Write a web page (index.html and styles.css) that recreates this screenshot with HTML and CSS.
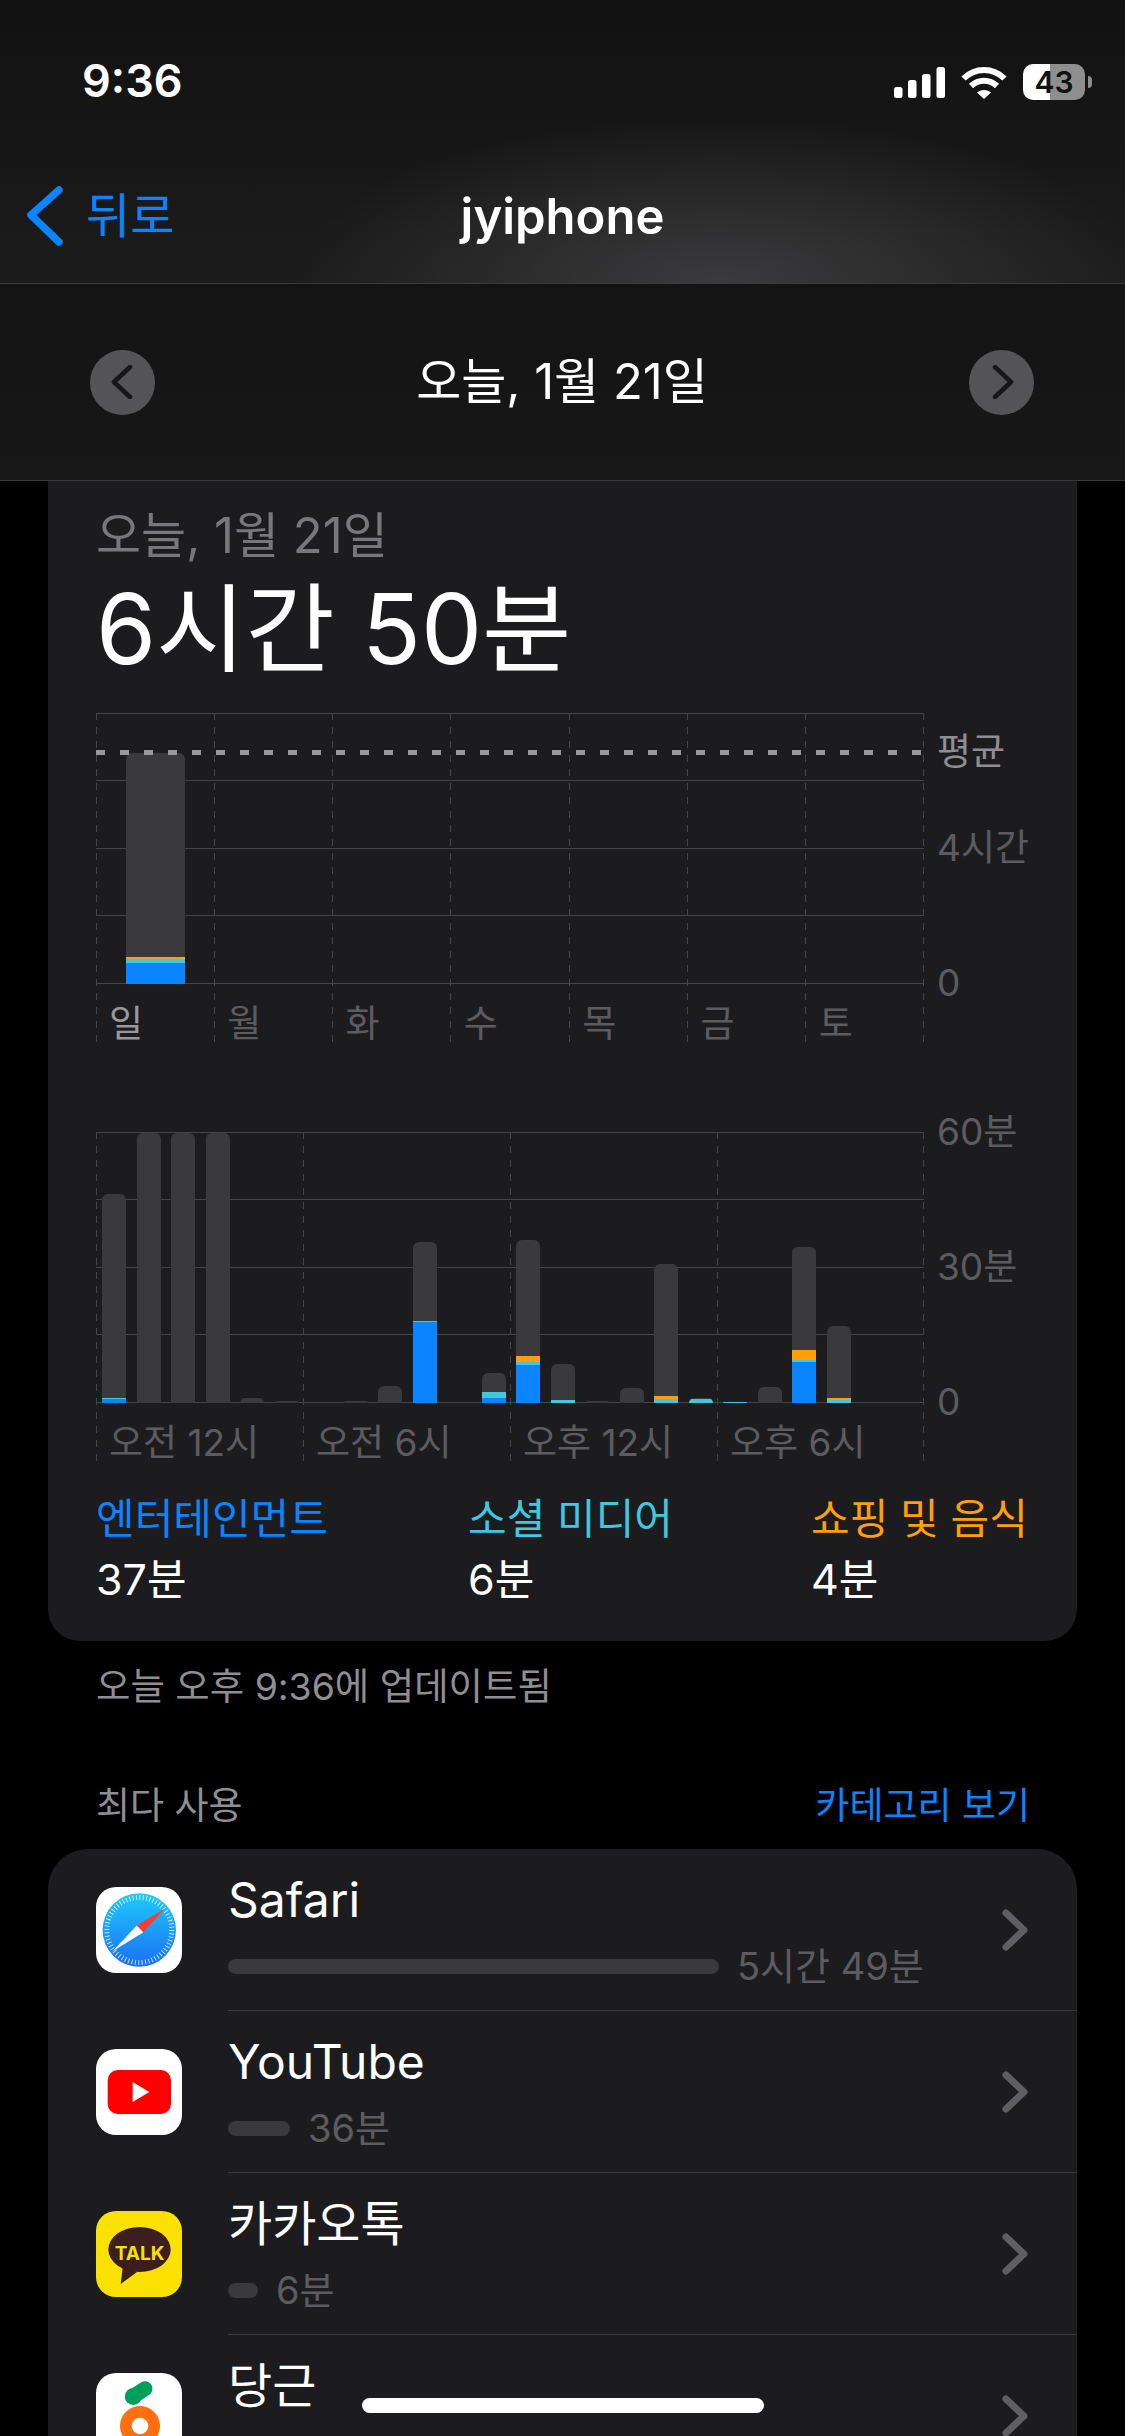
FILE: index.html
```html
<!DOCTYPE html>
<html lang="ko">
<head>
  <meta charset="UTF-8">
  <title>jyiphone</title>
  <link rel="stylesheet" href="styles.css">
</head>
<body>
  <header class="top">
    <div class="status">
      <span class="time">9:36</span>
      <div class="status-icons">
        <svg class="signal" width="51" height="31" viewBox="0 0 51 31" fill="#fff">
          <rect x="0" y="20" width="8.5" height="11" rx="2.5"/>
          <rect x="14" y="13" width="8.5" height="18" rx="2.5"/>
          <rect x="28" y="7" width="8.5" height="24" rx="2.5"/>
          <rect x="42.5" y="0" width="8.5" height="31" rx="2.5"/>
        </svg>
        <svg class="wifi" width="46" height="33" viewBox="0 0 46 33" fill="none" stroke="#fff" stroke-width="6">
          <path d="M2.5 12.5C14 1 32 1 43.5 12.5"/>
          <path d="M10 20C17.5 13 28.500 13 36 20"/>
          <path d="M16 26.500C20 23 26 23 30 26.500L23 33Z" fill="#fff" stroke="none"/>
        </svg>
        <div class="battery"><span>43</span></div>
      </div>
    </div>
    <nav class="nav">
      <a class="back">
        <svg width="38" height="60" viewBox="0 0 38 60" fill="none" stroke="#0a84ff" stroke-width="7.500" stroke-linecap="round" stroke-linejoin="round"><path d="M33 4 5 29 33 56"/></svg>
        <span>뒤로</span>
      </a>
      <h1 class="nav-title">jyiphone</h1>
    </nav>
  </header>

  <div class="date-bar">
    <button class="round-btn">
      <svg width="26" height="34" viewBox="0 0 26 34" fill="none" stroke="#17171a" stroke-width="4.500" stroke-linecap="round" stroke-linejoin="round"><path d="M20 2 4 17 20 32"/></svg>
    </button>
    <span class="date-bar-text">오늘, 1월 21일</span>
    <button class="round-btn">
      <svg width="26" height="34" viewBox="0 0 26 34" fill="none" stroke="#17171a" stroke-width="4.500" stroke-linecap="round" stroke-linejoin="round"><path d="M6 2 22 17 6 32"/></svg>
    </button>
  </div>

  <section class="card summary">
    <div class="summary-date">오늘, 1월 21일</div>
    <div class="summary-total">6시간 50분</div>

    <div class="chart week">
      <svg class="grid" width="830" height="331" viewBox="0 0 830 331" fill="none" stroke="#454547">
        <path d="M0 .5H828M0 67.500H828M0 135.500H828M0 202.500H828M0 270.500H828"/>
        <path stroke-dasharray="7 7" d="M.5 0V331M118.500 0V331M236.500 0V331M354.500 0V331M473.500 0V331M591.500 0V331M709.500 0V331M827.500 0V331"/>
      </svg>
      <div class="plot week-bars">
        <div class="bar">
          <div class="seg seg-idle"></div>
          <div class="seg seg-shop" style="height:2px"></div>
          <div class="seg seg-social" style="height:4px"></div>
          <div class="seg seg-ent" style="height:21px"></div>
        </div>
      </div>
      <div class="avg-line"></div>
      <span class="tick tick-avg">평균</span>
      <span class="tick tick-4h">4시간</span>
      <span class="tick tick-0">0</span>
      <div class="labels week-labels">
        <span class="today">일</span><span>월</span><span>화</span><span>수</span><span>목</span><span>금</span><span>토</span>
      </div>
    </div>

    <div class="chart day">
      <svg class="grid" width="830" height="331" viewBox="0 0 830 331" fill="none" stroke="#454547">
        <path d="M0 .5H828M0 67.500H828M0 135.500H828M0 202.500H828M0 270.500H828"/>
        <path stroke-dasharray="7 7" d="M.5 0V331M207.500 0V331M414.500 0V331M621.500 0V331M827.500 0V331"/>
      </svg>
      <div class="plot hour-bars">
        <div class="bar" style="height:209px"><div class="seg seg-idle"></div><div class="seg seg-social" style="height:1px"></div><div class="seg seg-ent" style="height:4px"></div></div>
        <div class="bar" style="height:270px"><div class="seg seg-idle"></div></div>
        <div class="bar" style="height:270px"><div class="seg seg-idle"></div></div>
        <div class="bar" style="height:270px"><div class="seg seg-idle"></div></div>
        <div class="bar" style="height:5px"><div class="seg seg-idle"></div></div>
        <div class="bar" style="height:2px"><div class="seg seg-idle"></div></div>
        <div class="bar" style="height:0"></div>
        <div class="bar" style="height:2px"><div class="seg seg-idle"></div></div>
        <div class="bar" style="height:17px"><div class="seg seg-idle"></div></div>
        <div class="bar" style="height:161px"><div class="seg seg-idle"></div><div class="seg seg-social" style="height:1px"></div><div class="seg seg-ent" style="height:81px"></div></div>
        <div class="bar" style="height:0"></div>
        <div class="bar" style="height:30px"><div class="seg seg-idle"></div><div class="seg seg-social" style="height:6px"></div><div class="seg seg-ent" style="height:5px"></div></div>
        <div class="bar" style="height:163px"><div class="seg seg-idle"></div><div class="seg seg-shop" style="height:6px"></div><div class="seg seg-social" style="height:3px"></div><div class="seg seg-ent" style="height:38px"></div></div>
        <div class="bar" style="height:39px"><div class="seg seg-idle"></div><div class="seg seg-social" style="height:3px"></div></div>
        <div class="bar" style="height:2px"><div class="seg seg-idle"></div></div>
        <div class="bar" style="height:15px"><div class="seg seg-idle"></div></div>
        <div class="bar" style="height:139px"><div class="seg seg-idle"></div><div class="seg seg-shop" style="height:3px"></div><div class="seg seg-social" style="height:4px"></div></div>
        <div class="bar" style="height:5px"><div class="seg seg-idle"></div><div class="seg seg-social" style="height:4px"></div></div>
        <div class="bar" style="height:1px"><div class="seg seg-social" style="height:1px"></div></div>
        <div class="bar" style="height:16px"><div class="seg seg-idle"></div></div>
        <div class="bar" style="height:156px"><div class="seg seg-idle"></div><div class="seg seg-shop" style="height:10px"></div><div class="seg seg-social" style="height:2px"></div><div class="seg seg-ent" style="height:41px"></div></div>
        <div class="bar" style="height:77px"><div class="seg seg-idle"></div><div class="seg seg-shop" style="height:2px"></div><div class="seg seg-social" style="height:3px"></div></div>
        <div class="bar" style="height:0"></div>
        <div class="bar" style="height:0"></div>
      </div>
      <span class="tick tick-60">60분</span>
      <span class="tick tick-30">30분</span>
      <span class="tick tick-0">0</span>
      <div class="labels day-labels">
        <span>오전 12시</span><span>오전 6시</span><span>오후 12시</span><span>오후 6시</span>
      </div>
    </div>

    <div class="legend">
      <div class="legend-item"><div class="legend-name ent">엔터테인먼트</div><div class="legend-value">37분</div></div>
      <div class="legend-item"><div class="legend-name social">소셜 미디어</div><div class="legend-value">6분</div></div>
      <div class="legend-item"><div class="legend-name shop">쇼핑 및 음식</div><div class="legend-value">4분</div></div>
    </div>
  </section>

  <p class="updated">오늘 오후 9:36에 업데이트됨</p>

  <div class="section-head">
    <span>최다 사용</span>
    <a class="link">카테고리 보기</a>
  </div>

  <section class="card apps">
    <div class="app-row">
      <svg class="app-icon" width="86" height="86" viewBox="0 0 86 86">
        <defs>
          <linearGradient id="safariBlue" x1="0" y1="0" x2="0" y2="1">
            <stop offset="0" stop-color="#1ecbfc"/>
            <stop offset="1" stop-color="#1b6ef3"/>
          </linearGradient>
        </defs>
        <rect width="86" height="86" rx="20" fill="#fff"/>
        <circle cx="43.300" cy="43" r="36.700" fill="url(#safariBlue)"/>
        <circle cx="43.300" cy="43" r="32.500" fill="none" stroke="#fff" stroke-opacity=".75" stroke-width="5" stroke-dasharray="1 2.400"/>
        <path d="M69 21.500 40.700 38.500 47.300 45.200Z" fill="#ff3b30"/>
        <path d="M16.700 64.200 40.700 38.500 47.300 45.200Z" fill="#fff"/>
      </svg>
      <div class="app-info">
        <div class="app-text">
          <div class="app-name">Safari</div>
          <div class="app-usage"><div class="usage-bar" style="width:491px"></div><span>5시간 49분</span></div>
        </div>
        <svg class="chevron" width="28" height="44" viewBox="0 0 28 44" fill="none" stroke="#5f5f63" stroke-width="7" stroke-linecap="round" stroke-linejoin="round"><path d="M5 5 23 22 5 39"/></svg>
      </div>
    </div>

    <div class="app-row">
      <svg class="app-icon" width="86" height="86" viewBox="0 0 86 86">
        <rect width="86" height="86" rx="20" fill="#fff"/>
        <rect x="11.700" y="21" width="63.300" height="44" rx="10" fill="#f00"/>
        <path d="M36.700 33 53.300 43 36.700 53Z" fill="#fff"/>
      </svg>
      <div class="app-info">
        <div class="app-text">
          <div class="app-name">YouTube</div>
          <div class="app-usage"><div class="usage-bar" style="width:62px"></div><span>36분</span></div>
        </div>
        <svg class="chevron" width="28" height="44" viewBox="0 0 28 44" fill="none" stroke="#5f5f63" stroke-width="7" stroke-linecap="round" stroke-linejoin="round"><path d="M5 5 23 22 5 39"/></svg>
      </div>
    </div>

    <div class="app-row">
      <svg class="app-icon" width="86" height="86" viewBox="0 0 86 86">
        <rect width="86" height="86" rx="20" fill="#fae100"/>
        <ellipse cx="43.500" cy="38.500" rx="31.200" ry="22.500" fill="#3c1e1e"/>
        <path d="M27 54 24.700 73 41 61Z" fill="#3c1e1e"/>
        <text class="talk" x="43.500" y="49" text-anchor="middle">TALK</text>
      </svg>
      <div class="app-info">
        <div class="app-text">
          <div class="app-name">카카오톡</div>
          <div class="app-usage"><div class="usage-bar" style="width:30px"></div><span>6분</span></div>
        </div>
        <svg class="chevron" width="28" height="44" viewBox="0 0 28 44" fill="none" stroke="#5f5f63" stroke-width="7" stroke-linecap="round" stroke-linejoin="round"><path d="M5 5 23 22 5 39"/></svg>
      </div>
    </div>

    <div class="app-row">
      <svg class="app-icon" width="86" height="86" viewBox="0 0 86 86">
        <rect width="86" height="86" rx="20" fill="#fff"/>
        <circle cx="37.300" cy="23.500" r="8.500" fill="#00a05b"/>
        <path d="M37 23.500 49 15.700" stroke="#00a05b" stroke-width="15" stroke-linecap="round"/>
        <path d="M44 33C55 33 64 42 64 53 64 64 52 78 44 84 36 78 24 64 24 53 24 42 33 33 44 33Z" fill="#ff6f0f"/>
        <circle cx="44" cy="53" r="8.300" fill="#fff"/>
      </svg>
      <div class="app-info">
        <div class="app-text">
          <div class="app-name">당근</div>
        </div>
        <svg class="chevron" width="28" height="44" viewBox="0 0 28 44" fill="none" stroke="#5f5f63" stroke-width="7" stroke-linecap="round" stroke-linejoin="round"><path d="M5 5 23 22 5 39"/></svg>
      </div>
    </div>
  </section>

  <div class="home-indicator"></div>
</body>
</html>
```

FILE: styles.css
```css
* {
  margin: 0;
  padding: 0;
  box-sizing: border-box;
}

html, body {
  height: 2436px;
  overflow: hidden;
}

body {
  position: relative;
  width: 1125px;
  background: #000;
  color: #fff;
  font-family: Inter, "Noto Sans CJK KR", sans-serif;
  font-weight: 400;
}

/* header */
.top {
  height: 284px;
  border-bottom: 1px solid #3a3a3c;
  background:
    radial-gradient(ellipse 430px 165px at 720px 283px, #3b3b3d 0%, rgba(59, 59, 61, 0) 100%),
    linear-gradient(#111, #1c1c1c);
}

.status {
  height: 150px;
  padding: 56px 40px 0 82px;
  display: flex;
  justify-content: space-between;
  align-items: flex-start;
}

.time {
  font-size: 45px;
  line-height: 50px;
  font-weight: 600;
}

.status-icons {
  display: flex;
  align-items: center;
  padding-top: 8px;
}

.signal { margin-right: 16px; }
.wifi { margin-right: 16px; }

.battery {
  position: relative;
  width: 62px;
  height: 36px;
  border-radius: 10px;
  background: linear-gradient(90deg, #fff 27px, #8e8e8e 27px);
  color: #111;
  font-size: 30px;
  line-height: 36px;
  font-weight: 600;
  text-align: center;
}

.battery::after {
  content: "";
  position: absolute;
  right: -7px;
  top: 12px;
  width: 4px;
  height: 12px;
  border-radius: 0 6px 6px 0;
  background: #8e8e8e;
}

.nav {
  position: relative;
  height: 133px;
  display: flex;
  align-items: center;
  justify-content: center;
}

.back {
  position: absolute;
  left: 26px;
  top: 33px;
  display: flex;
  align-items: center;
  gap: 22px;
  color: #0a84ff;
  font-size: 48px;
  line-height: 66px;
}

.nav-title {
  font-size: 49px;
  font-weight: 600;
  line-height: 64px;
}

/* date switcher */
.date-bar {
  height: 197px;
  padding: 0 91px 0 90px;
  display: flex;
  justify-content: space-between;
  align-items: center;
  border-bottom: 1px solid #3a3a3c;
  background: linear-gradient(#131313, #181818);
}

.date-bar-text {
  font-size: 49px;
  line-height: 60px;
}

.round-btn {
  width: 65px;
  height: 65px;
  border: none;
  border-radius: 50%;
  background: #545456;
  display: flex;
  align-items: center;
  justify-content: center;
}

/* cards */
.card {
  margin: 0 48px;
  background: #1c1c1e;
}

.summary {
  height: 1160px;
  padding: 27px 48px 0;
  border-radius: 0 0 32px 32px;
}

.summary-date {
  color: #77777c;
  font-size: 49px;
  line-height: 56px;
}

.summary-total {
  margin-top: 5px;
  font-size: 97px;
  line-height: 120px;
}

.chart {
  position: relative;
  width: 930px;
  height: 331px;
}

.week { margin-top: 24px; }
.day { margin-top: 88px; }

.grid {
  position: absolute;
  left: 0;
  top: 0;
}

.plot {
  position: absolute;
  left: 0;
  top: 1px;
  width: 828px;
  height: 270px;
  display: flex;
  align-items: flex-end;
}

.week-bars { padding-left: 30px; }
.week-bars .bar {
  width: 59px;
  height: 231px;
}

.hour-bars {
  display: grid;
  grid-template-columns: repeat(24, 34.500px);
  padding-left: 6px;
  align-items: end;
}

.hour-bars .bar { width: 24px; }

.bar {
  display: flex;
  flex-direction: column;
  border-radius: 6px 6px 0 0;
  overflow: hidden;
}

.seg { flex: none; }
.seg-idle { flex: 1; background: #3a3a3c; }
.seg-ent { background: #0a84ff; }
.seg-social { background: #40c8e0; }
.seg-shop { background: #ff9f0a; }

.avg-line {
  position: absolute;
  left: 0;
  top: 37px;
  width: 828px;
  height: 5px;
  background: repeating-linear-gradient(90deg, #98989d 0 9px, transparent 9px 24px);
}

.tick {
  position: absolute;
  left: 841px;
  color: #5c5c60;
  font-size: 37px;
  line-height: 44px;
  white-space: nowrap;
}

.tick-avg { top: 17px; color: #8e8e93; }
.tick-4h { top: 113px; }
.tick-60 { top: -22px; }
.tick-30 { top: 113px; }
.tick-0 { top: 248px; }

.labels {
  position: absolute;
  left: 0;
  top: 289px;
  width: 828px;
  display: grid;
  color: #5c5c60;
  font-size: 37px;
  line-height: 44px;
}

.labels span { padding-left: 13px; white-space: nowrap; }
.week-labels { grid-template-columns: repeat(7, 1fr); }
.day-labels { grid-template-columns: repeat(4, 1fr); }
.today { color: #98989d; }

.legend {
  margin-top: 28px;
  display: grid;
  grid-template-columns: 372px 343px auto;
}

.legend-name {
  font-size: 42px;
  line-height: 56px;
}

.ent { color: #0a84ff; }
.social { color: #40c8e0; }
.shop { color: #ff9f0a; }

.legend-value {
  margin-top: 4px;
  font-size: 43px;
  line-height: 56px;
}

.updated {
  margin-top: 24px;
  padding-left: 96px;
  color: #8e8e93;
  font-size: 37.400px;
  line-height: 44px;
}

.section-head {
  margin-top: 75px;
  padding: 0 95px 0 96px;
  display: flex;
  justify-content: space-between;
  color: #8e8e93;
  font-size: 37px;
  line-height: 44px;
}

.link { color: #0a84ff; }

/* app list */
.apps {
  margin-top: 21px;
  border-radius: 40px 40px 0 0;
}

.app-row {
  height: 162px;
  padding-left: 48px;
  display: flex;
  align-items: center;
  gap: 46px;
}

.app-icon { flex: none; }

.app-info {
  flex: 1;
  height: 162px;
  padding-right: 48px;
  display: flex;
  align-items: center;
  justify-content: space-between;
  border-bottom: 1px solid #3a3a3c;
}

.app-text {
  align-self: flex-start;
  padding-top: 21px;
}

.app-name {
  font-size: 48px;
  line-height: 60px;
}

.app-usage {
  margin-top: 14px;
  display: flex;
  align-items: center;
  gap: 18px;
  color: #5c5c60;
  font-size: 38px;
  line-height: 44px;
}

.usage-bar {
  height: 15px;
  border-radius: 8px;
  background: #3a3a3c;
}

.talk {
  fill: #fae100;
  font-size: 19px;
  font-weight: 700;
}

.home-indicator {
  position: absolute;
  left: 362px;
  top: 2398px;
  width: 402px;
  height: 15px;
  border-radius: 8px;
  background: #fff;
}
```
